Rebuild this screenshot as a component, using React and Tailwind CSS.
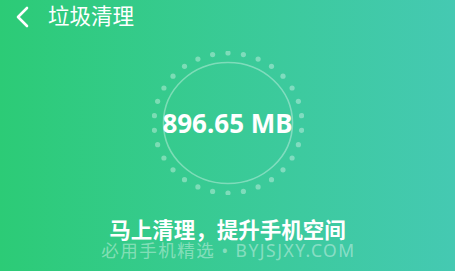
import React from 'react';

const dots = Array.from({ length: 30 }, (_, i) => {
  const a = (i * 12 * Math.PI) / 180;
  return { cx: 76 + 74 * Math.sin(a), cy: 72 - 70 * Math.cos(a) };
});

const Ring = () => (
  <svg width="152" height="144" viewBox="0 0 152 144" className="absolute inset-0">
    {dots.map((d, i) => (
      <circle key={i} cx={d.cx} cy={d.cy} r="2.6" fill="rgba(255,255,255,0.35)" />
    ))}
    <ellipse cx="76" cy="72" rx="64.5" ry="60.5" fill="none" stroke="rgba(255,255,255,0.35)" strokeWidth="1.6" />
  </svg>
);

export default function App() {
  return (
    <div
      className="w-[455px] h-[271px] overflow-hidden flex flex-col bg-gradient-to-r from-[#2ccb76] to-[#45c9b2] text-white"
      style={{ fontFamily: '"Noto Sans", "Noto Sans CJK SC", sans-serif' }}
    >
      <div className="h-[32px] flex items-center pl-[14px]">
        <svg width="16" height="22" viewBox="0 0 16 22" className="mt-[1px]">
          <path d="M13 2 L4 11 L13 20" fill="none" stroke="white" strokeWidth="2.6" strokeLinecap="round" strokeLinejoin="round" />
        </svg>
        <span className="ml-[18px] text-[21.5px] leading-none">垃圾清理</span>
      </div>
      <div className="flex justify-center mt-[19px]">
        <div className="relative w-[152px] h-[144px] flex items-center justify-center">
          <Ring />
          <span className="relative text-[26px] font-bold leading-none">896.65 MB</span>
        </div>
      </div>
      <div className="mt-[24px] text-center text-[21.5px] font-bold leading-none">马上清理，提升手机空间</div>
      <div className="mt-[1px] pl-[2px] text-center text-[17.5px] tracking-[1.5px] leading-none text-white/40">必用手机精选 • BYJSJXY.COM</div>
    </div>
  );
}
